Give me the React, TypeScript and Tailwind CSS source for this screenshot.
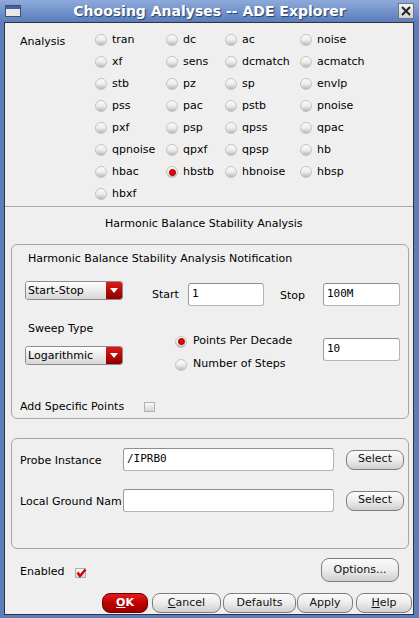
import React from 'react';

const rows: string[][] = [
  ['tran', 'dc', 'ac', 'noise'],
  ['xf', 'sens', 'dcmatch', 'acmatch'],
  ['stb', 'pz', 'sp', 'envlp'],
  ['pss', 'pac', 'pstb', 'pnoise'],
  ['pxf', 'psp', 'qpss', 'qpac'],
  ['qpnoise', 'qpxf', 'qpsp', 'hb'],
  ['hbac', 'hbstb', 'hbnoise', 'hbsp'],
  ['hbxf'],
];

function Radio({ checked }: { checked?: boolean }) {
  return (
    <span className="w-[12px] h-[12px] shrink-0 rounded-full border border-[#c4c4c4] bg-linear-to-b from-[#fbfbfb] via-[#ededed] to-[#b9b9b9] flex items-center justify-center">
      {checked && <span className="w-[7px] h-[7px] rounded-full bg-[#e40000] border border-[#a00000]" />}
    </span>
  );
}

function Dropdown({ label }: { label: string }) {
  return (
    <div className="w-[98px] h-[19px] flex rounded-[3px] border border-[#8c8c8c] overflow-hidden">
      <div className="flex-1 bg-linear-to-b from-white to-[#d6d6d6] pl-[2px] leading-[17px]">{label}</div>
      <div className="w-[16px] bg-linear-to-b from-[#e01818] to-[#8e0000] flex items-center justify-center">
        <svg width="8" height="5" viewBox="0 0 8 5">
          <path d="M0 0 H8 L4 5 Z" fill="#fff" />
        </svg>
      </div>
    </div>
  );
}

function Field({ value, w }: { value?: string; w: string }) {
  return (
    <div className={`${w} h-[23px] bg-white border border-[#b4b4b4] border-t-[#8e8e8e] border-l-[#9a9a9a] rounded-[3px] flex items-center pl-[3px] font-['DejaVu_Sans_Mono',monospace] text-[11px]`}>
      {value}
    </div>
  );
}

function Btn({ children, className }: { children: React.ReactNode; className: string }) {
  return (
    <div className={`${className} flex items-center justify-center rounded-[8px] border border-[#7e7e7e] bg-linear-to-b from-[#fbfbfb] via-[#ececec] to-[#cfcfcf] text-[#111]`}>
      {children}
    </div>
  );
}

function Check({ checked }: { checked?: boolean }) {
  return (
    <div className="w-[11px] h-[10px] border border-[#b0b0b0] bg-linear-to-b from-[#fafafa] to-[#d4d4d4] relative">
      {checked && (
        <svg className="absolute left-[0px] top-[-1px]" width="11" height="10" viewBox="0 0 11 10">
          <path d="M1.5 4.5 L4 8 L9.5 1.5" stroke="#d00000" strokeWidth="2.4" fill="none" />
        </svg>
      )}
    </div>
  );
}

export default function App() {
  return (
    <div className="w-[419px] h-[618px] bg-[#5c7ebd] font-['DejaVu_Sans',sans-serif] text-[11px] text-black overflow-hidden">
      {/* Title bar */}
      <div className="h-[22px] flex items-start bg-linear-to-b from-[#8eaadb] to-[#5a7dbd]">
        <div className="ml-[5px] mt-[5px] w-[16px] h-[12px] border border-[#3d4f73] bg-[#e9e9e3] flex flex-col">
          <div className="h-[3px] bg-[#3f63a6]" />
        </div>
        <div className="flex-1 text-center text-white font-bold text-[14px] leading-[22px] [text-shadow:1px_1px_1px_#24406f]">
          Choosing Analyses -- ADE Explorer
        </div>
        <div className="mr-[5px] mt-[3px] w-[16px] h-[16px] border border-[#777] bg-linear-to-b from-[#f2f2f2] to-[#d2d2d2] flex items-center justify-center">
          <svg width="10" height="10" viewBox="0 0 10 10">
            <path d="M1 1 L9 9 M9 1 L1 9" stroke="#222" strokeWidth="2" />
          </svg>
        </div>
      </div>

      {/* Content */}
      <div className="ml-[4px] w-[410px] h-[593px] border border-[#333] bg-[#efefef] flex flex-col overflow-hidden">
        {/* Analysis radios */}
        <div className="flex pt-[6px]">
          <div className="w-[90px] pl-[15px] h-[22px] leading-[22px] mt-[2px]">Analysis</div>
          <div className="grid grid-cols-[71px_59px_75px_1fr]">
            {rows.map((r, i) =>
              r.map((name) => (
                <div key={`${i}-${name}`} className="flex items-center h-[22px]">
                  <Radio checked={name === 'hbstb'} />
                  <span className="ml-[5px]">{name}</span>
                </div>
              ))
            )}
          </div>
        </div>

        <div className="mt-[1px] h-[1px] bg-[#a9a9a9]" />

        <div className="mt-[10px] pl-[100px] leading-[14px]">Harmonic Balance Stability Analysis</div>

        {/* Group 1 */}
        <div className="mt-[13px] ml-[6px] w-[398px] h-[175px] shrink-0 border border-[#a6a6a6] rounded-[6px] flex flex-col">
          <div className="mt-[7px] pl-[16px] leading-[14px]">Harmonic Balance Stability Analysis Notification</div>

          <div className="mt-[15px] flex items-start">
            <div className="ml-[13px]">
              <Dropdown label="Start-Stop" />
            </div>
            <div className="ml-[29px] w-[36px] mt-[7px] leading-[14px]">Start</div>
            <div className="mt-[2px]">
              <Field w="w-[76px]" value="1" />
            </div>
            <div className="ml-[16px] w-[43px] mt-[8px] leading-[14px]">Stop</div>
            <div className="mt-[2px]">
              <Field w="w-[77px]" value="100M" />
            </div>
          </div>

          <div className="mt-[16px] flex items-start">
            <div className="ml-[13px] w-[98px]">
              <div className="pl-[3px] leading-[14px]">Sweep Type</div>
              <div className="mt-[10px]">
                <Dropdown label="Logarithmic" />
              </div>
            </div>
            <div className="ml-[52px] w-[148px] mt-[8px]">
              <div className="h-[23px] flex items-center">
                <Radio checked />
                <span className="ml-[6px]">Points Per Decade</span>
              </div>
              <div className="h-[23px] flex items-center">
                <Radio />
                <span className="ml-[6px]">Number of Steps</span>
              </div>
            </div>
            <div className="mt-[16px]">
              <Field w="w-[77px]" value="10" />
            </div>
          </div>

          <div className="mt-[24px] flex items-center pl-[8px]">
            <div className="w-[124px] leading-[14px]">Add Specific Points</div>
            <Check />
          </div>
        </div>

        {/* Group 2 */}
        <div className="mt-[19px] ml-[6px] w-[398px] h-[111px] shrink-0 border border-[#a6a6a6] rounded-[6px] flex flex-col">
          <div className="mt-[9px] flex items-center">
            <div className="ml-[8px] w-[103px] pt-[3px] whitespace-nowrap">Probe Instance</div>
            <Field w="w-[211px]" value="/IPRB0" />
            <Btn className="ml-[12px] w-[58px] h-[20px]">Select</Btn>
          </div>
          <div className="mt-[18px] flex items-center">
            <div className="ml-[8px] w-[103px] pt-[3px] whitespace-nowrap">Local Ground Nam</div>
            <Field w="w-[211px]" />
            <Btn className="ml-[12px] w-[58px] h-[20px]">Select</Btn>
          </div>
        </div>

        {/* Enabled / Options */}
        <div className="mt-[9px] flex items-start">
          <div className="ml-[15px] w-[55px] mt-[7px] leading-[14px]">Enabled</div>
          <div className="mt-[10px]">
            <Check checked />
          </div>
          <Btn className="ml-[235px] w-[78px] h-[24px]">Options...</Btn>
        </div>

        {/* Dialog buttons */}
        <div className="mt-[11px] flex h-[20px]">
          <div className="ml-[97px] w-[46px] h-[20px] flex items-center justify-center rounded-[8px] border border-[#6a0000] bg-linear-to-b from-[#e01c1c] via-[#c00000] to-[#9a0000] text-white font-bold">
            <span className="underline">O</span>K
          </div>
          <Btn className="ml-[4px] w-[69px] h-[20px]">
            <span className="underline">C</span>ancel
          </Btn>
          <Btn className="ml-[2px] w-[73px] h-[20px]">Defaults</Btn>
          <Btn className="ml-[1px] w-[56px] h-[20px]">Apply</Btn>
          <Btn className="ml-[3px] w-[56px] h-[20px]">
            <span className="underline">H</span>elp
          </Btn>
        </div>
      </div>
    </div>
  );
}
